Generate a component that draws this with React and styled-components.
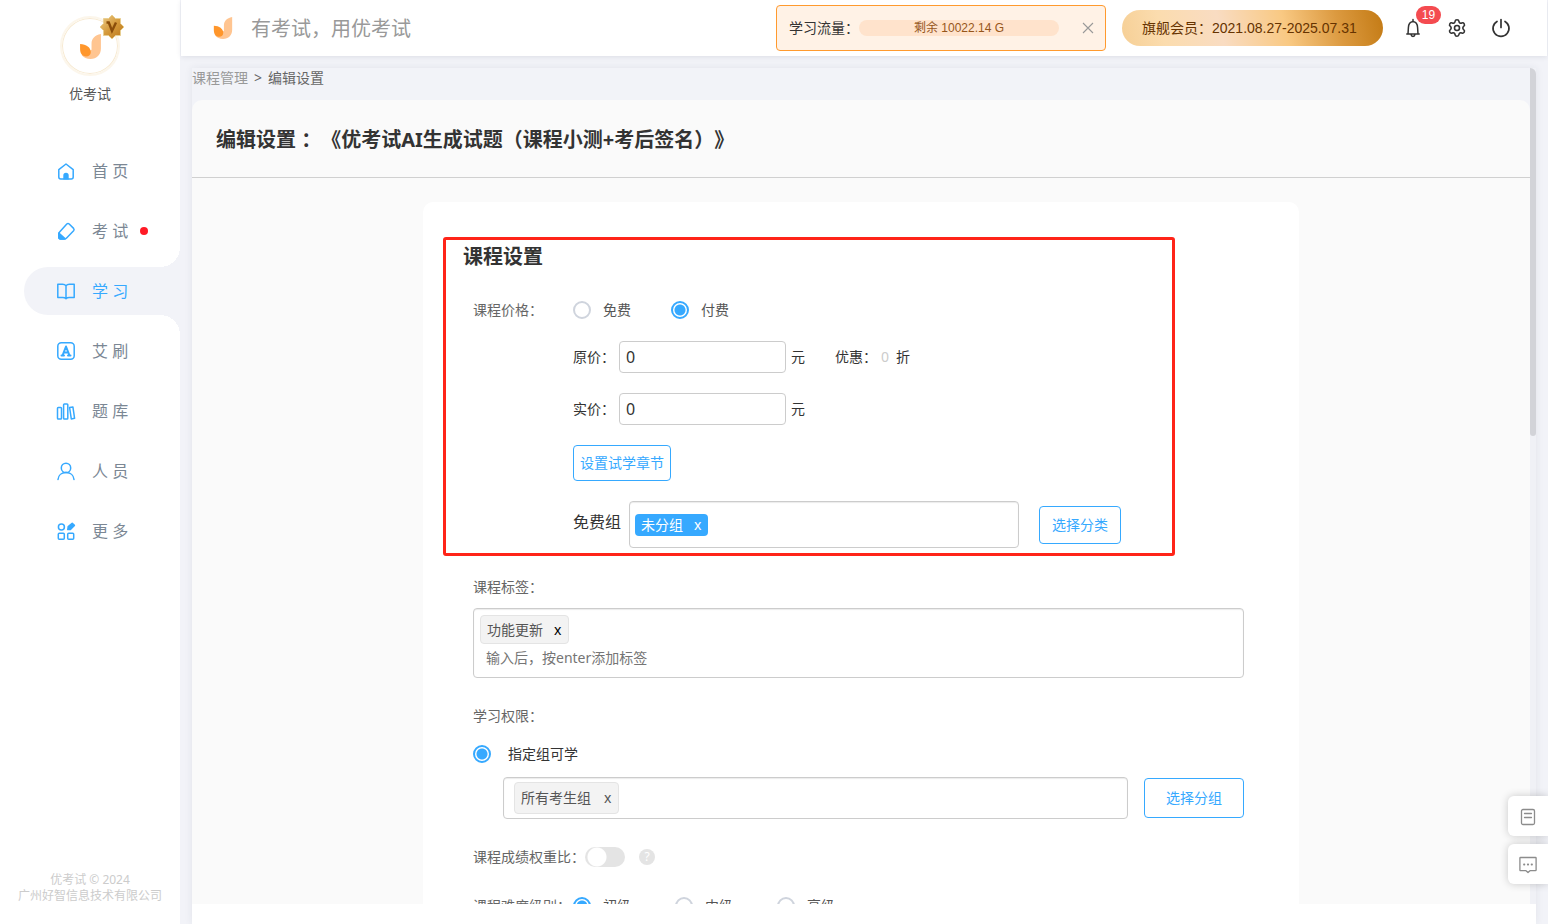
import React, { useState } from "react";
import styled, { createGlobalStyle } from "styled-components";
import { Settings } from "lucide-react";

const BLUE = "#36a9ff";
const PAGE = "#f2f3f8";
const SANS = '"Noto Sans", "Noto Sans CJK SC", sans-serif';
const ARIAL = '"Liberation Sans", "Noto Sans CJK SC", sans-serif';

const GlobalStyle = createGlobalStyle`
  *, *::before, *::after { box-sizing: border-box; }
  body {
    margin: 0;
    background: ${PAGE};
    color: #333;
    font-family: ${SANS};
    font-size: 14px;
    line-height: 22px;
    text-spacing-trim: space-all;
  }
  button, input { font: inherit; color: inherit; }
  button { cursor: pointer; }
`;

const Shell = styled.div`
  display: flex;
  height: 100vh;
  overflow: hidden;
`;

/* ---------- Sidebar ---------- */

const Sidebar = styled.aside`
  flex: none;
  width: 180px;
  display: flex;
  flex-direction: column;
  background: #fff;
`;

const Profile = styled.div`
  display: flex;
  flex-direction: column;
  align-items: center;
  gap: 7px;
  padding-top: 16px;
  color: #555;
`;

const Avatar = styled.div`
  position: relative;
  display: flex;
  align-items: center;
  justify-content: center;
  width: 60px;
  height: 60px;
  border: 2px solid #fcf6eb;
  border-radius: 50%;
  box-shadow: inset 0 0 0 1px #f7ead2;
`;

const VipBadge = styled.svg`
  position: absolute;
  top: -3px;
  right: -6px;
  width: 24px;
  height: 24px;
`;

const Nav = styled.nav`
  flex: 1;
  display: flex;
  flex-direction: column;
  gap: 12px;
  padding: 42px 0 0 24px;
`;

const NavItem = styled.a`
  position: relative;
  display: flex;
  align-items: center;
  height: 48px;
  padding-left: 32px;
  border-radius: 24px 0 0 24px;
  background: ${(p) => (p.$active ? PAGE : "transparent")};
  color: ${(p) => (p.$active ? BLUE : "#7b8794")};
  font-size: 16px;
  text-decoration: none;

  svg {
    flex: none;
    width: 20px;
    height: 20px;
    margin-right: 16px;
    color: ${BLUE};
  }

  &::before,
  &::after {
    content: "";
    display: ${(p) => (p.$active ? "block" : "none")};
    position: absolute;
    right: 0;
    width: 20px;
    height: 20px;
  }
  &::before {
    bottom: 100%;
    background: radial-gradient(circle at 0 0, transparent 20px, ${PAGE} 20px);
  }
  &::after {
    top: 100%;
    background: radial-gradient(circle at 0 100%, transparent 20px, ${PAGE} 20px);
  }
`;

const Dot = styled.span`
  width: 8px;
  height: 8px;
  margin-left: 12px;
  border-radius: 50%;
  background: #ff1a26;
`;

const Copyright = styled.footer`
  padding-bottom: 20px;
  color: #ccc;
  font-size: 12px;
  line-height: 16px;
  text-align: center;
`;

/* ---------- Top bar ---------- */

const Main = styled.div`
  flex: 1;
  min-width: 0;
  display: flex;
  flex-direction: column;
`;

const TopBar = styled.header`
  flex: none;
  display: flex;
  align-items: center;
  height: 56px;
  margin: 0 1px;
  padding: 0 36px 0 32px;
  background: #fff;
  box-shadow: 0 1px 5px rgba(40, 45, 80, 0.1);
`;

const Slogan = styled.div`
  flex: 1;
  margin-left: 18px;
  padding-top: 2px;
  color: #999;
  font-size: 20px;
  white-space: nowrap;
`;

const Quota = styled.div`
  display: flex;
  align-items: center;
  width: 330px;
  height: 46px;
  padding: 0 7px 0 12px;
  border: 1px solid #ff9a2e;
  border-radius: 4px;
  background: #fff2e6;
  white-space: nowrap;
`;

const QuotaBar = styled.div`
  flex: none;
  width: 200px;
  height: 16px;
  border-radius: 8px;
  background: #ffe3cc;
  color: #96561a;
  font-family: ${ARIAL};
  font-size: 12px;
  line-height: 16px;
  text-align: center;
`;

const IconButton = styled.button`
  position: relative;
  display: flex;
  align-items: center;
  justify-content: center;
  flex: none;
  width: 20px;
  height: 20px;
  margin-left: ${(p) => p.$gap || 24}px;
  padding: 0;
  border: 0;
  background: none;
  color: ${(p) => p.$color || "#333"};
  svg { flex: none; }
`;

const Member = styled.div`
  height: 36px;
  width: 261px;
  margin: 0 4px 0 16px;
  padding: 0 20px;
  border-radius: 18px;
  background: linear-gradient(76deg, #f6cf95 0%, #fbdcae 16%, #f9dcc2 38%, #f9c983 62%, #dc9a40 82%, #c37a14 100%);
  color: #663300;
  font-family: ${ARIAL};
  line-height: 37px;
  white-space: nowrap;
`;

const Count = styled.span`
  position: absolute;
  left: 13px;
  top: -12px;
  width: 25px;
  height: 18px;
  border-radius: 9px;
  background: #f44b50;
  color: #fff;
  font-family: ${ARIAL};
  font-size: 12px;
  line-height: 18px;
  text-align: center;
`;

/* ---------- Content ---------- */

const Panel = styled.main`
  flex: 1;
  min-height: 0;
  display: flex;
  margin: 12px 12px 0;
  padding-bottom: 20px;
  background: #fff;
  box-shadow: 0 0 8px rgba(40, 45, 80, 0.08);
`;

const Scroller = styled.div`
  flex: 1;
  min-width: 0;
  overflow-y: auto;
  scrollbar-width: none;
  background: ${PAGE};
`;

const ScrollTrack = styled.div`
  flex: none;
  width: 6px;
  background: #f0f1f6;
`;

const ScrollThumb = styled.div`
  height: 44%;
  border-radius: 0 6px 3px 3px;
  background: #d2d3d8;
`;

const Breadcrumb = styled.nav`
  display: flex;
  gap: 6px;
  height: 32px;
  line-height: 20px;
  color: #666;
  a { color: #999; text-decoration: none; }
`;

const Page = styled.div`
  border-radius: 10px 10px 0 0;
  background: #fafafa;
`;

const PageTitle = styled.h1`
  margin: 0;
  padding: 25px 24px 22px;
  border-bottom: 1px solid #d0d0d0;
  font-size: 20px;
  line-height: 30px;
`;

const Card = styled.form`
  max-width: 876px;
  margin: 24px auto 0;
  padding: 35px 0 40px;
  border-radius: 10px 10px 0 0;
  background: #fff;
`;

const Highlight = styled.section`
  margin: 0 124px 0 20px;
  padding: 0 51px 5px 17px;
  border: 3px solid #ff2418;
  border-radius: 3px;
`;

const SectionTitle = styled.h2`
  margin: 0 0 25px;
  font-size: 20px;
  line-height: 34px;
`;

const Row = styled.div`
  display: flex;
  align-items: center;
  min-height: 22px;
  margin-left: ${(p) => p.$indent || 0}px;
  margin-bottom: ${(p) => p.$below || 0}px;
`;

const FieldName = styled.span`
  flex: none;
  min-width: ${(p) => p.$width || 0}px;
  color: #666;
  white-space: nowrap;
`;

const Fields = styled.div`
  margin: 20px 55px 0 50px;
`;

const RadioLabel = styled.label`
  display: flex;
  align-items: center;
  gap: ${(p) => p.$gap || 12}px;
  margin-right: ${(p) => p.$after || 0}px;
  color: ${(p) => (p.$dark ? "#333" : "#555")};
  white-space: nowrap;
`;

const RadioInput = styled.input`
  appearance: none;
  flex: none;
  width: 18px;
  height: 18px;
  margin: 0;
  border: 2px solid #cfd4dd;
  border-radius: 50%;
  background: #fff;
  &:checked {
    border-color: ${BLUE};
    background: radial-gradient(circle, ${BLUE} 5px, #fff 6px);
  }
`;

const PriceLabel = styled.label`
  width: 46px;
  white-space: nowrap;
`;

const PriceInput = styled.input`
  width: 167px;
  height: 32px;
  margin-right: 5px;
  padding: 0 6px;
  border: 1px solid #ccc;
  border-radius: 4px;
  background: #fff;
  font-size: 16px;
  outline: 0;
`;

const Discount = styled.span`
  display: flex;
  margin-left: 30px;
`;

const DiscountValue = styled.span`
  margin: 0 7px 0 4px;
  color: #ccc;
`;

const OutlineButton = styled.button`
  flex: none;
  width: ${(p) => p.$width}px;
  height: ${(p) => p.$height}px;
  padding: 0;
  border: 1px solid ${BLUE};
  border-radius: 4px;
  background: #fff;
  color: ${BLUE};
  white-space: nowrap;
`;

const GroupName = styled.span`
  width: 56px;
  padding-bottom: 5px;
  font-size: 16px;
  white-space: nowrap;
`;

const TagBox = styled.div`
  flex: 1;
  display: flex;
  flex-direction: ${(p) => (p.$stacked ? "column" : "row")};
  align-items: ${(p) => (p.$stacked ? "flex-start" : "center")};
  height: ${(p) => p.$height}px;
  padding: ${(p) => p.$pad};
  margin-right: ${(p) => p.$after || 0}px;
  margin-bottom: ${(p) => p.$below || 0}px;
  border: 1px solid #ccc;
  border-radius: 4px;
  background: #fff;
  box-shadow: inset 0 1px 1px rgba(0, 0, 0, 0.08);
`;

const Tag = styled.span`
  flex: none;
  display: flex;
  align-items: center;
  gap: ${(p) => p.$gap || 10}px;
  height: ${(p) => p.$height}px;
  padding: 0 6px;
  border: ${(p) => (p.$solid ? "0" : "1px solid #e4e4e4")};
  border-radius: 4px;
  background: ${(p) => (p.$solid ? BLUE : "#f3f3f3")};
  color: ${(p) => (p.$solid ? "#fff" : "#555")};
  white-space: nowrap;
`;

const TagClose = styled.button`
  padding: 0 1px;
  border: 0;
  background: none;
  color: ${(p) => p.$color || "inherit"};
  line-height: 20px;
`;

const TagInput = styled.input`
  width: 100%;
  height: 28px;
  padding: 0 6px;
  border: 0;
  outline: 0;
  background: none;
  &::placeholder { color: #757575; opacity: 1; }
`;

const Switch = styled.input`
  appearance: none;
  width: 40px;
  height: 20px;
  margin: 0 14px 0 0;
  border-radius: 10px;
  background: radial-gradient(circle at 12px 10px, #fff 9px, #e4e4e4 10px);
  &:checked {
    background: radial-gradient(circle at 28px 10px, #fff 9px, ${BLUE} 10px);
  }
`;

const Help = styled.button`
  width: 16px;
  height: 16px;
  padding: 0;
  border: 0;
  border-radius: 50%;
  background: #e4e4e4;
  color: #fff;
  font-size: 12px;
  line-height: 16px;
`;

/* ---------- Floating tools ---------- */

const Tools = styled.div`
  position: fixed;
  right: 0;
  bottom: 40px;
  display: flex;
  flex-direction: column;
  gap: 8px;
`;

const Tool = styled.button`
  display: flex;
  align-items: center;
  justify-content: center;
  width: 40px;
  height: 40px;
  padding: 2px 0 0;
  border: 0;
  border-radius: 6px 0 0 6px;
  background: #fff;
  color: #8c8c8c;
  box-shadow: 0 0 8px rgba(0, 0, 0, 0.2);
`;

/* ---------- Drawings ---------- */

const Logo = ({ width, height }) => (
  <svg width={width} height={height} viewBox="0 0 20 24" aria-hidden="true">
    <path d="M20 0C14 1 11 5 11 9v6L1.500 20.200Q4.500 24 10 24c6 0 10-4 10-10z" fill="#ffc591" />
    <path d="M0 9.500c6 0 10.300 3.500 10.300 7.800 0 2.700-1.800 4.300-4.500 4.300C2 21.600 0 18.500 0 14.500z" fill="#ff962b" />
  </svg>
);

const stroke = {
  viewBox: "0 0 20 20",
  fill: "none",
  stroke: "currentColor",
  strokeWidth: 1.5,
  strokeLinejoin: "round",
  strokeLinecap: "round",
  "aria-hidden": true,
};

const HomeIcon = () => (
  <svg {...stroke}>
    <path d="M2.800 8.600 10 3l7.200 5.600V16q0 2-2 2H4.800q-2 0-2-2z" />
    <path d="M7.300 18.500v-4a2.700 2.700 0 0 1 5.400 0v4z" fill="currentColor" stroke="none" />
  </svg>
);
const ExamIcon = () => (
  <svg {...stroke}>
    <path d="M10.800 3q1.200-1.100 2.400 0l4.400 4.400q1 1.200 0 2.300l-7 7.200q-1 1.100-2.500 1.100H4.500q-1.700 0-1.700-1.700v-3.500q0-1 .8-1.900z" />
    <path d="M2.800 12 9.200 17.800 8 18H4.500q-1.700 0-1.700-1.700z" fill="currentColor" />
  </svg>
);
const StudyIcon = () => (
  <svg {...stroke}>
    <path d="M10 4.800Q9 3.200 6.500 3.200H1.800v13.400h5q2 0 3.200 1.200 1.200-1.200 3.200-1.200h5V3.200h-4.700Q11 3.200 10 4.800zM10 4.800v12.800" />
  </svg>
);
const AIcon = () => (
  <svg {...stroke}>
    <rect x="1.800" y="1.800" width="16.400" height="16.400" rx="3.500" />
    <path d="M6.500 14.500 10 5.500l3.500 9M7.800 11.600h4.400M5.500 14.500h2.500M12 14.500h2.500" strokeWidth="2" />
  </svg>
);
const BankIcon = () => (
  <svg {...stroke}>
    <rect x="1.500" y="6.500" width="4" height="11.500" rx=".8" />
    <rect x="7.600" y="3" width="4.200" height="15" rx=".8" />
    <path d="m13.600 6.500 3.300-.6 1.700 11.400-3.300.6z" />
  </svg>
);
const PeopleIcon = () => (
  <svg {...stroke}>
    <circle cx="10" cy="6.900" r="4.700" />
    <path d="M2 18.500c.3-4.200 3.500-6.900 8-6.900s7.700 2.700 8 6.900" />
  </svg>
);
const MoreIcon = () => (
  <svg {...stroke}>
    <circle cx="5.400" cy="6" r="3" />
    <path d="m11.800 8.600.4-3 4-3.400 2.200 2.200-4 4z" fill="currentColor" />
    <rect x="2.300" y="12.200" width="6" height="6" rx="1" />
    <rect x="11.700" y="12.200" width="6" height="6" rx="1" />
  </svg>
);

const NAV = [
  { name: "首 页", Icon: HomeIcon },
  { name: "考 试", Icon: ExamIcon, dot: true },
  { name: "学 习", Icon: StudyIcon, active: true },
  { name: "艾 刷", Icon: AIcon },
  { name: "题 库", Icon: BankIcon },
  { name: "人 员", Icon: PeopleIcon },
  { name: "更 多", Icon: MoreIcon },
];

const starPoints = Array.from({ length: 16 }, (_, i) => {
  const r = i % 2 ? 9.2 : 12;
  const a = (i * Math.PI) / 8 - Math.PI / 2;
  return `${(12 + r * Math.cos(a)).toFixed(2)},${(12 + r * Math.sin(a)).toFixed(2)}`;
}).join(" ");

function Radio({ name, value, current, onChange, children, ...rest }) {
  return (
    <RadioLabel {...rest}>
      <RadioInput type="radio" name={name} checked={current === value} onChange={() => onChange(value)} />
      {children}
    </RadioLabel>
  );
}

export default function App() {
  const [price, setPrice] = useState("paid");
  const [level, setLevel] = useState("low");

  return (
    <>
      <GlobalStyle />
      <Shell>
        <Sidebar>
          <Profile>
            <Avatar>
              <Logo width={21} height={25} />
              <VipBadge viewBox="0 0 24 24" aria-hidden="true">
                <defs>
                  <linearGradient id="gold" x1="0" y1="0" x2="1" y2="1">
                    <stop offset="0" stopColor="#efd08e" />
                    <stop offset=".5" stopColor="#d59a3c" />
                    <stop offset="1" stopColor="#b97416" />
                  </linearGradient>
                </defs>
                <polygon points={starPoints} fill="url(#gold)" stroke="#e8cf92" strokeWidth="1" />
                <path d="M6.500 7.500h2.300l3.200 8.500L16 7.500" fill="none" stroke="#8a4d0a" strokeWidth="2.400" />
              </VipBadge>
            </Avatar>
            <span>优考试</span>
          </Profile>
          <Nav>
            {NAV.map(({ name, Icon, dot, active }) => (
              <NavItem key={name} href="#" $active={active}>
                <Icon />
                {name}
                {dot && <Dot />}
              </NavItem>
            ))}
          </Nav>
          <Copyright>
            <div>优考试 © 2024</div>
            <div>广州好智信息技术有限公司</div>
          </Copyright>
        </Sidebar>

        <Main>
          <TopBar>
            <Logo width={20} height={22} />
            <Slogan>有考试，用优考试</Slogan>
            <Quota>
              学习流量：
              <QuotaBar>剩余 10022.14 G</QuotaBar>
              <IconButton type="button" aria-label="关闭" $gap={19} $color="#999">
                <svg width="12" height="12" viewBox="0 0 12 12" fill="none" stroke="currentColor" strokeWidth="1.100">
                  <path d="m1 1 10 10M11 1 1 11" />
                </svg>
              </IconButton>
            </Quota>
            <Member>旗舰会员：2021.08.27-2025.07.31</Member>
            <IconButton type="button" aria-label="消息" $gap={16}>
              <svg width="20" height="20" {...stroke}>
                <path d="M3.800 16h12.400M5 16l.4-6.500Q5.600 4 10 3.400 14.400 4 14.600 9.500L15 16M10 3.400V1.600M8 16.400q.3 2 2 2t2-2" />
              </svg>
              <Count>19</Count>
            </IconButton>
            <IconButton type="button" aria-label="设置">
              <Settings size={20} strokeWidth={1.9} />
            </IconButton>
            <IconButton type="button" aria-label="退出">
              <svg width="20" height="20" {...stroke} strokeWidth="1.700">
                <path d="M10 1.500v8M6 3.400a8 8 0 1 0 8 0" />
              </svg>
            </IconButton>
          </TopBar>

          <Panel>
            <Scroller>
              <Breadcrumb>
                <a href="#">课程管理</a>
                <span>&gt;</span>
                <span>编辑设置</span>
              </Breadcrumb>
              <Page>
                <PageTitle>编辑设置 ：《优考试AI生成试题（课程小测+考后签名）》</PageTitle>
                <Card>
                  <Highlight>
                    <SectionTitle>课程设置</SectionTitle>
                    <Row $indent={10} $below={20}>
                      <FieldName $width={100}>课程价格：</FieldName>
                      <Radio name="price" value="free" current={price} onChange={setPrice} $after={40}>免费</Radio>
                      <Radio name="price" value="paid" current={price} onChange={setPrice}>付费</Radio>
                    </Row>
                    <Row $indent={110} $below={20}>
                      <PriceLabel htmlFor="list">原价：</PriceLabel>
                      <PriceInput id="list" defaultValue="0" />
                      元
                      <Discount>
                        优惠：<DiscountValue>0</DiscountValue>折
                      </Discount>
                    </Row>
                    <Row $indent={110} $below={20}>
                      <PriceLabel htmlFor="sale">实价：</PriceLabel>
                      <PriceInput id="sale" defaultValue="0" />
                      元
                    </Row>
                    <Row $indent={110} $below={20}>
                      <OutlineButton type="button" $width={98} $height={36}>设置试学章节</OutlineButton>
                    </Row>
                    <Row $indent={110}>
                      <GroupName>免费组</GroupName>
                      <TagBox $height={47} $pad="0 5px" $after={20}>
                        <Tag $solid $height={22}>
                          未分组
                          <TagClose type="button" aria-label="移除未分组">x</TagClose>
                        </Tag>
                      </TagBox>
                      <OutlineButton type="button" $width={82} $height={38}>选择分类</OutlineButton>
                    </Row>
                  </Highlight>

                  <Fields>
                    <Row $below={10}>
                      <FieldName as="label" htmlFor="tags">课程标签：</FieldName>
                    </Row>
                    <TagBox $stacked $height={70} $pad="6px" $below={27}>
                      <Tag $height={29}>
                        功能更新
                        <TagClose type="button" aria-label="移除功能更新" $color="#000">x</TagClose>
                      </Tag>
                      <TagInput id="tags" placeholder="输入后，按enter添加标签" />
                    </TagBox>
                    <Row $below={16}>
                      <FieldName>学习权限：</FieldName>
                    </Row>
                    <Row $below={12}>
                      <Radio name="access" value="group" current="group" onChange={() => {}} $gap={17} $dark>
                        指定组可学
                      </Radio>
                    </Row>
                    <Row $indent={30} $below={27}>
                      <TagBox $height={42} $pad="0 10px" $after={16}>
                        <Tag $height={32} $gap={12}>
                          所有考生组
                          <TagClose type="button" aria-label="移除所有考生组">x</TagClose>
                        </Tag>
                      </TagBox>
                      <OutlineButton type="button" $width={100} $height={40}>选择分组</OutlineButton>
                    </Row>
                    <Row $below={27}>
                      <FieldName as="label" htmlFor="weight">课程成绩权重比：</FieldName>
                      <Switch id="weight" type="checkbox" />
                      <Help type="button" aria-label="说明">?</Help>
                    </Row>
                    <Row>
                      <FieldName $width={100}>课程难度级别：</FieldName>
                      <Radio name="level" value="low" current={level} onChange={setLevel} $after={44}>初级</Radio>
                      <Radio name="level" value="mid" current={level} onChange={setLevel} $after={44}>中级</Radio>
                      <Radio name="level" value="high" current={level} onChange={setLevel}>高级</Radio>
                    </Row>
                  </Fields>
                </Card>
              </Page>
            </Scroller>
            <ScrollTrack>
              <ScrollThumb />
            </ScrollTrack>
          </Panel>
        </Main>
      </Shell>

      <Tools>
        <Tool type="button" aria-label="文档">
          <svg width="20" height="20" {...stroke} strokeWidth="1.300">
            <rect x="3.500" y="2.500" width="13" height="15" rx="1.500" />
            <path d="M6.500 6.500h7M6.500 10.500h7" />
          </svg>
        </Tool>
        <Tool type="button" aria-label="反馈">
          <svg width="20" height="20" {...stroke} strokeWidth="1.300">
            <path d="M2.500 2.500h15q.6 0 .6.600v12q0 .6-.6.600H12l-2 1.800-2-1.800H2.500q-.6 0-.6-.6v-12q0-.6.600-.6z" />
            <path d="M6 9.500h.4M9.800 9.500h.4M13.600 9.500h.4" strokeWidth="1.800" />
          </svg>
        </Tool>
      </Tools>
    </>
  );
}
